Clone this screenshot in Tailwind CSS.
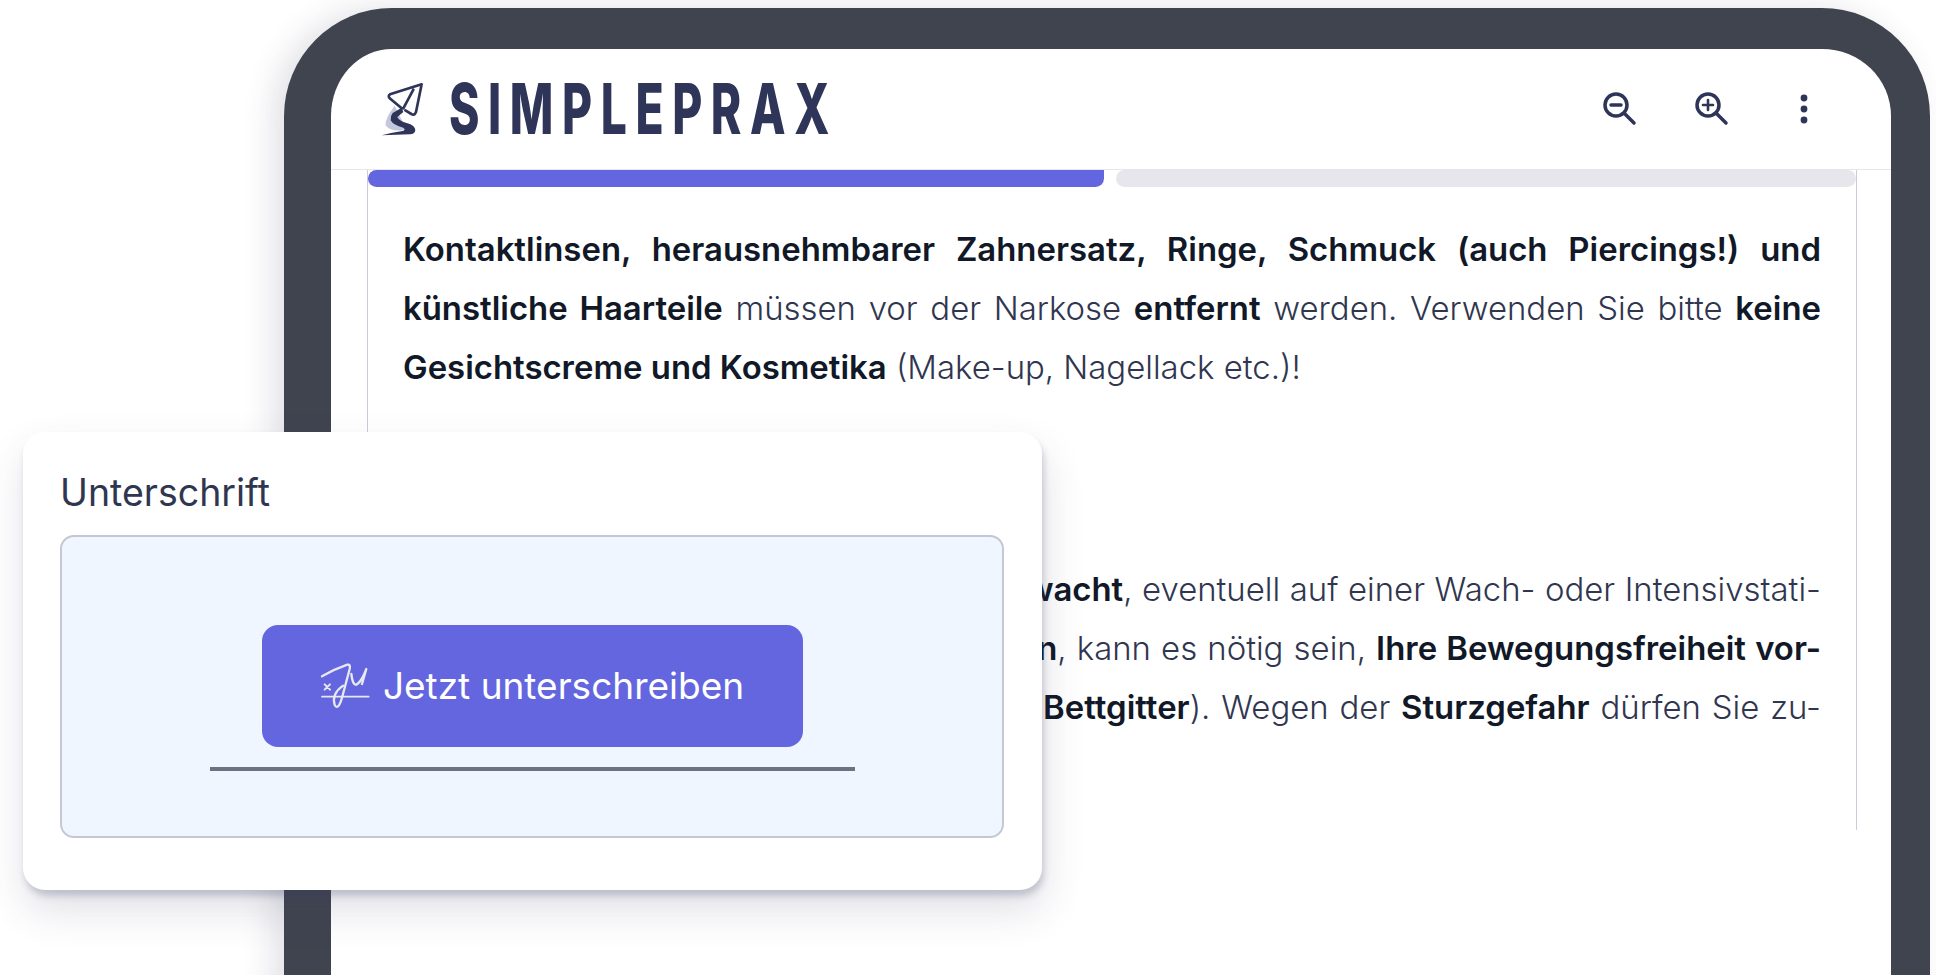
<!DOCTYPE html>
<html lang="de">
<head>
<meta charset="UTF-8">
<title>Simpleprax</title>
<script src="https://cdn.jsdelivr.net/npm/@tailwindcss/browser@4"></script>
</head>
<body class="bg-white font-['Inter',sans-serif]">
<div class="relative h-[975px] overflow-hidden pt-2 pl-[284px]">

  <!-- tablet frame -->
  <div class="w-[1646px] h-[1100px] bg-white rounded-t-[108px] border-solid border-[#40444f] border-t-[41px] border-l-[47px] border-r-[39px] shadow-[-12px_0_30px_rgba(60,60,90,0.14)]">

    <header class="h-[121px] flex items-center justify-between border-b border-[#e5e7eb] pl-[49px] pr-[83px]">
      <div class="flex items-center gap-[24px]">
        <svg width="45" height="55" viewBox="30 35 135 165" fill="none">
          <path d="M74 106Q44 145 47 165Q60 184 100 180L106 170Z" fill="#c5c8dc"/>
          <path d="M68 128L95 112L100 125L82 140Q88 152 110 158Q136 165 136 180Q134 192 120 192L35 195Q60 188 98 182Q108 178 100 172Q70 165 62 150Q60 138 68 128Z" fill="#2e3558"/>
          <path d="M155 42L60 72Q53 77 59 84L95 114M155 42L138 125Q133 137 124 131L106 120M130 58L100 114" stroke="#2e3558" stroke-width="8" stroke-linejoin="round" stroke-linecap="round"/>
        </svg>
        <span class="origin-left scale-x-[0.66] font-extrabold text-[70px] leading-none tracking-[13px] text-[#2e3558]">SIMPLEPRAX</span>
      </div>
      <div class="flex items-center gap-[58px] text-[#2e3558]">
        <svg width="34" height="34" viewBox="0 0 34 34" fill="none" stroke="currentColor" stroke-width="3.5" stroke-linecap="round"><circle cx="13" cy="13" r="11"/><path d="M21 21L31 31M8 13H18"/></svg>
        <svg width="34" height="34" viewBox="0 0 34 34" fill="none" stroke="currentColor" stroke-width="3.5" stroke-linecap="round"><circle cx="13" cy="13" r="11"/><path d="M21 21L31 31"/><path d="M8 13H18M13 8V18" stroke-width="2.6"/></svg>
        <svg class="ml-[13px]" width="8" height="30" viewBox="0 0 8 30" fill="currentColor"><circle cx="4" cy="4" r="3.4"/><circle cx="4" cy="15" r="3.4"/><circle cx="4" cy="26" r="3.4"/></svg>
      </div>
    </header>

    <!-- document page -->
    <div class="ml-9 w-[1490px] h-[660px] border-x border-[#c9ccd9]">
      <div class="flex gap-3">
        <div class="w-[736px] h-[17px] bg-[#6366de] rounded-b-[9px] rounded-l-[9px]"></div>
        <div class="flex-1 h-[17px] bg-[#e6e6ec] rounded-[9px]"></div>
      </div>
      <div class="px-[35px] pt-[33px] text-[32.9px] leading-[59px] text-[#30364f] font-light">
        <div class="[text-align-last:justify]"><b class="font-semibold text-[#111827]">Kontaktlinsen, herausnehmbarer Zahnersatz, Ringe, Schmuck (auch Piercings!) und</b></div>
        <div class="[text-align-last:justify]"><b class="font-semibold text-[#111827]">künstliche Haarteile</b> müssen vor der Narkose <b class="font-semibold text-[#111827]">entfernt</b> werden. Verwenden Sie bitte <b class="font-semibold text-[#111827]">keine</b></div>
        <div><b class="font-semibold text-[#111827]">Gesichtscreme und Kosmetika</b> (Make-up, Nagellack etc.)!</div>
        <div class="mt-[163px] [text-align-last:justify]">Sie werden nach der Narkose dann <b class="font-semibold text-[#111827]">überwacht</b>, eventuell auf einer Wach- oder Intensivstati-</div>
        <div class="[text-align-last:justify]">on behandelt. Bei <b class="font-semibold text-[#111827]">Verwirrtheitszuständen</b>, kann es nötig sein, <b class="font-semibold text-[#111827]">Ihre Bewegungsfreiheit vor-</b></div>
        <div class="[text-align-last:justify]">übergehend einzuschränken (z. B. durch <b class="font-semibold text-[#111827]">Bettgitter</b>). Wegen der <b class="font-semibold text-[#111827]">Sturzgefahr</b> dürfen Sie zu-</div>
      </div>
    </div>
  </div>

  <!-- signature card over the frame -->
  <div class="absolute left-[23px] top-[432px] w-[1019px] h-[458px] bg-white rounded-[22px] pt-[38px] pl-[37px] pr-[38px] shadow-[2px_6px_6px_rgba(60,60,100,0.22),2px_20px_40px_rgba(60,60,100,0.16)]">
    <div class="text-[37.5px] leading-[46px] text-[#30364f]">Unterschrift</div>
    <div class="mt-[19px] h-[303px] bg-[#eff6ff] border-2 border-[#c6c7d4] rounded-[14px] flex flex-col items-center pt-[88px]">
      <button class="w-[541px] h-[122px] bg-[#6366de] rounded-[16px] flex items-center justify-center gap-[13px] text-white text-[37px]">
        <svg width="50" height="49" viewBox="66 129 150 147" fill="none" stroke="#e8e8f0" stroke-linecap="round" stroke-linejoin="round">
          <path d="M72 172Q110 150 148 137Q158 135 155 150L135 225Q122 278 110 258Q100 225 135 200" stroke-width="7"/>
          <path d="M160 165Q165 205 178 195Q192 185 205 150L192 195" stroke-width="7"/>
          <path d="M72 233H212" stroke-width="5"/>
          <path d="M80 196L96 212M96 196L80 212" stroke-width="6"/>
        </svg>
        <span>Jetzt unterschreiben</span>
      </button>
      <div class="mt-5 w-[645px] h-1 bg-[#6b7280]"></div>
    </div>
  </div>
</div>
</body>
</html>
